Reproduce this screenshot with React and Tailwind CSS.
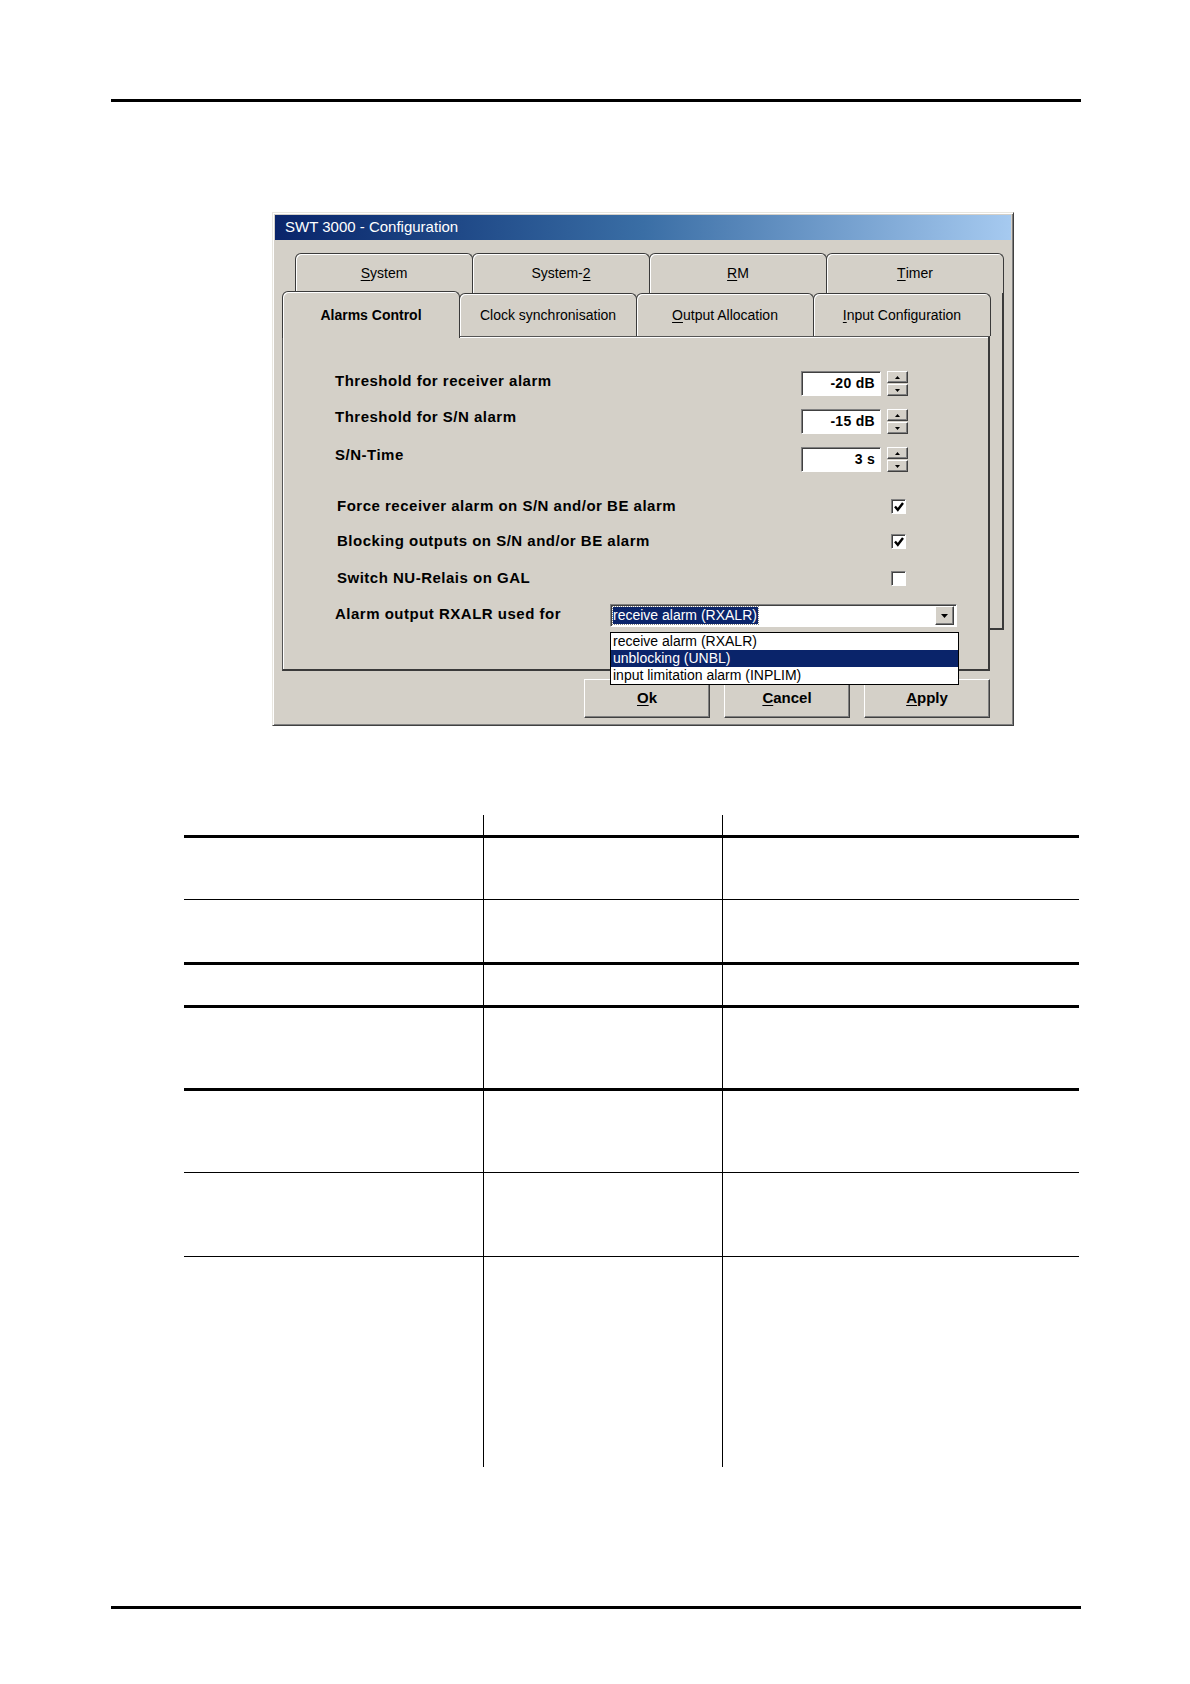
import React from 'react'

const FACE = 'bg-[#d4d0c8]'
const RAISED = 'border border-t-white border-l-white border-r-[#404040] border-b-[#404040] shadow-[inset_-1px_-1px_0_#808080]'
const SUNKEN = 'border border-t-[#808080] border-l-[#808080] border-r-white border-b-white shadow-[inset_1px_1px_0_#404040]'

const U = ({ children }) => <span className="underline underline-offset-[2px]">{children}</span>

const Tab = ({ children, selected = false, h = 'h-[40px]' }) => (
  <div
    className={
      'relative -ml-px flex w-[178px] items-center justify-center rounded-t-[6px] border border-b-0 border-[#3a3a3a] ' +
      FACE +
      ' shadow-[inset_1px_1px_0_#fff] text-[14px] text-black ' +
      (selected ? 'z-10 -mt-[2px] h-[47px] font-bold' : h)
    }
  >
    {children}
  </div>
)

const Spin = ({ value }) => (
  <div className="flex items-center">
    <div className={'flex h-[25px] w-[80px] items-center justify-end bg-white pr-[5px] text-[14px] font-bold tracking-[0.3px] ' + SUNKEN}>
      {value}
    </div>
    <div className="ml-[6px] flex flex-col">
      <div className={'flex h-[12px] w-[21px] items-center justify-center ' + FACE + ' ' + RAISED}>
        <svg width="5" height="3" viewBox="0 0 5 3"><path d="M2.5 0 L5 3 L0 3 Z" fill="#000" /></svg>
      </div>
      <div className={'mt-[1px] flex h-[12px] w-[21px] items-center justify-center ' + FACE + ' ' + RAISED}>
        <svg width="5" height="3" viewBox="0 0 5 3"><path d="M0 0 L5 0 L2.5 3 Z" fill="#000" /></svg>
      </div>
    </div>
  </div>
)

const Check = ({ on }) => (
  <div className={'flex h-[15px] w-[15px] items-center justify-center bg-white ' + SUNKEN}>
    {on && (
      <svg width="12" height="12" viewBox="0 0 12 12">
        <polyline points="2,5.5 4.8,8.8 10,2" fill="none" stroke="#000" strokeWidth="2.4" />
      </svg>
    )}
  </div>
)

const Button = ({ children }) => (
  <div className={'flex h-[39px] w-[126px] items-center justify-center text-[15px] font-bold ' + FACE + ' ' + RAISED}>
    {children}
  </div>
)

const Row = ({ h, thick }) => (
  <div className={'grid grid-cols-[299px_239px_357px] border-black ' + h + ' ' + (thick ? 'border-t-[3px]' : 'border-t')}>
    <div />
    <div className="border-l border-black" />
    <div className="border-l border-black" />
  </div>
)

const Label = ({ w, pl, mt = '', children }) => (
  <div className={w + ' ' + pl + ' ' + mt + ' text-[15px] font-bold tracking-[0.5px]'}>{children}</div>
)

export default function App() {
  return (
    <div className="flex h-[1684px] w-[1190px] flex-col bg-white font-['Liberation_Sans',Arial,sans-serif] text-black">
      <div className="ml-[111px] mt-[99px] h-[3px] w-[970px] bg-black" />

      {/* dialog */}
      <div className={'ml-[272px] mt-[110px] flex h-[514px] w-[742px] flex-col border border-t-[#e8e6e0] border-l-[#e8e6e0] border-r-[#404040] border-b-[#404040] shadow-[inset_1px_1px_0_#fff,inset_-1px_-1px_0_#808080] ' + FACE}>
        <div className="mx-[2px] mt-[2px] flex h-[25px] items-center bg-linear-to-r from-[#0a246a] via-[#3a6ea5] to-[#a6caf0] pl-[10px] text-[15px] text-white">
          SWT 3000 - Configuration
        </div>

        <div className="relative mt-[13px]">
          {/* back panel of first tab row */}
          <div className="absolute left-[22px] top-[40px] h-[337px] w-[709px] border-r-2 border-b-2 border-[#3a3a3a] shadow-[inset_1px_0_0_#fff]" />

          <div className="ml-[23px] flex h-[40px]">
            <Tab><U>S</U>ystem</Tab>
            <Tab>System-<U>2</U></Tab>
            <Tab><U>R</U>M</Tab>
            <Tab><U>T</U>imer</Tab>
          </div>

          <div className="relative ml-[10px] flex h-[43px] items-start">
            <Tab selected>Alarms Control</Tab>
            <Tab h="h-[43px]">Clock synchronisation</Tab>
            <Tab h="h-[43px]"><U>O</U>utput Allocation</Tab>
            <Tab h="h-[43px]"><U>I</U>nput Configuration</Tab>
          </div>

          {/* front panel */}
          <div className={'relative ml-[9px] flex h-[335px] w-[708px] flex-col border border-[#555] border-r-2 border-b-2 border-r-[#3a3a3a] border-b-[#3a3a3a] pt-[34px] shadow-[inset_1px_1px_0_#fff] ' + FACE}>
            <div className="flex h-[25px] items-center">
              <Label w="w-[518px]" pl="pl-[52px]" mt="-mt-[4px]">Threshold for receiver alarm</Label>
              <Spin value="-20 dB" />
            </div>
            <div className="mt-[13px] flex h-[25px] items-center">
              <Label w="w-[518px]" pl="pl-[52px]" mt="-mt-[8px]">Threshold for S/N alarm</Label>
              <Spin value="-15 dB" />
            </div>
            <div className="mt-[13px] flex h-[25px] items-center">
              <Label w="w-[518px]" pl="pl-[52px]" mt="-mt-[8px]">S/N-Time</Label>
              <Spin value="3 s" />
            </div>

            <div className="mt-[22px] flex h-[25px] items-center">
              <Label w="w-[608px]" pl="pl-[54px]">Force receiver alarm on S/N and/or BE alarm</Label>
              <Check on />
            </div>
            <div className="mt-[10px] flex h-[25px] items-center">
              <Label w="w-[608px]" pl="pl-[54px]">Blocking outputs on S/N and/or BE alarm</Label>
              <Check on />
            </div>
            <div className="mt-[12px] flex h-[25px] items-center">
              <Label w="w-[608px]" pl="pl-[54px]">Switch NU-Relais on GAL</Label>
              <Check on={false} />
            </div>

            <div className="mt-[13px] flex h-[23px] items-center">
              <Label w="w-[327px]" pl="pl-[52px]" mt="-mt-[3px]">Alarm output RXALR used for</Label>
              <div className="relative">
                <div className={'flex h-[23px] w-[347px] items-center bg-white pl-[2px] pr-[2px] ' + SUNKEN}>
                  <span className="bg-[#0a246a] pr-[1px] text-[14px] leading-[17px] text-white outline-1 outline-dotted outline-[#808080]">receive alarm (RXALR)</span>
                  <div className={'ml-auto flex h-[19px] w-[19px] items-center justify-center ' + FACE + ' ' + RAISED}>
                    <svg width="7" height="4" viewBox="0 0 7 4"><path d="M0 0 L7 0 L3.5 4 Z" fill="#000" /></svg>
                  </div>
                </div>
                <div className="absolute left-0 top-[28px] z-20 flex w-[349px] flex-col border border-black bg-white text-[14px] leading-[17px]">
                  <div className="h-[17px] pl-[2px]">receive alarm (RXALR)</div>
                  <div className="h-[17px] bg-[#0a246a] pl-[2px] text-white">unblocking (UNBL)</div>
                  <div className="h-[17px] pl-[2px]">input limitation alarm (INPLIM)</div>
                </div>
              </div>
            </div>
          </div>

          <div className="ml-[311px] mt-[8px] flex gap-[14px]">
            <Button><U>O</U>k</Button>
            <Button><U>C</U>ancel</Button>
            <Button><U>A</U>pply</Button>
          </div>
        </div>
      </div>

      {/* table */}
      <div className="ml-[184px] mt-[89px] flex w-[895px] flex-col">
        <div className="grid h-[20px] grid-cols-[299px_239px_357px]">
          <div />
          <div className="border-l border-black" />
          <div className="border-l border-black" />
        </div>
        <Row h="h-[64px]" thick />
        <Row h="h-[63px]" />
        <Row h="h-[43px]" thick />
        <Row h="h-[83px]" thick />
        <Row h="h-[84px]" thick />
        <Row h="h-[84px]" />
        <Row h="h-[211px]" />
      </div>

      <div className="ml-[111px] mt-[139px] h-[3px] w-[970px] bg-black" />
    </div>
  )
}
